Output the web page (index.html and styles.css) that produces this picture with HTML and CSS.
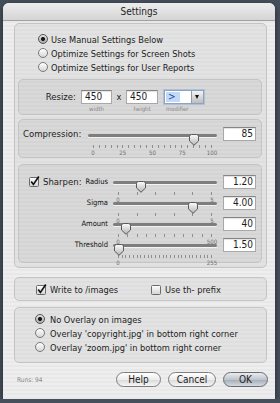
FILE: index.html
```html
<!DOCTYPE html>
<html lang="en">
<head>
    <meta charset="UTF-8">
    <title>Settings</title>
    <link rel="stylesheet" href="styles.css">
</head>
<body>
    <svg class="defs" width="0" height="0">
        <defs>
            <linearGradient id="thumbFill" x1="0" y1="0" x2="0" y2="1">
                <stop offset="0" stop-color="#fdfdfd"/>
                <stop offset="1" stop-color="#b4b4b4"/>
            </linearGradient>
            <linearGradient id="boxFill" x1="0" y1="0" x2="0" y2="1">
                <stop offset="0" stop-color="#ffffff"/>
                <stop offset="1" stop-color="#d2d2d2"/>
            </linearGradient>
        </defs>
    </svg>

    <div class="window">
        <div class="titlebar">Settings</div>

        <div class="content">
            <div class="group outer">
                <div class="radios">
                    <div class="radio-row"><span class="radio on"></span>Use Manual Settings Below</div>
                    <div class="radio-row"><span class="radio"></span>Optimize Settings for Screen Shots</div>
                    <div class="radio-row"><span class="radio"></span>Optimize Settings for User Reports</div>
                </div>

                <div class="group resize">
                    <div class="resize-grid">
                        <span class="resize-label">Resize:</span>
                        <span class="field">450</span>
                        <span class="times">x</span>
                        <span class="field">450</span>
                        <span class="select">
                            <span class="sel">&gt;</span>
                            <span class="arrow"></span>
                        </span>
                        <span></span>
                        <span class="sub">width</span>
                        <span></span>
                        <span class="sub">height</span>
                        <span class="sub sub-left">modifier</span>
                    </div>
                </div>

                <div class="group compression">
                    <div class="comp-row">
                        <span class="comp-label">Compression:</span>
                        <div class="slider slider-wide">
                            <div class="rail">
                                <div class="groove"></div>
                                <div class="thumb-lane">
                                    <svg class="thumb" style="left: 85%" width="10" height="12" viewBox="0 0 10 12"><path d="M2.5 .5h5a2 2 0 0 1 2 2V7L5 11.3.5 7V2.5a2 2 0 0 1 2-2z" fill="url(#thumbFill)" stroke="#595959"/></svg>
                                </div>
                            </div>
                            <div class="ticks">
                                <i></i><i></i><i></i><i></i><i></i><i></i><i></i>
                                <i></i><i></i><i></i><i></i><i></i><i></i><i></i>
                                <i></i><i></i><i></i><i></i><i></i><i></i><i></i>
                            </div>
                            <div class="tick-labels">
                                <span>0</span><span>25</span><span>50</span><span>75</span><span>100</span>
                            </div>
                        </div>
                        <span class="field num">85</span>
                    </div>
                </div>

                <div class="group sharpen">
                    <div class="s-row">
                        <div class="s-label first">
                            <svg class="check" width="11" height="11" viewBox="0 0 11 11"><rect x=".5" y="1.5" width="9" height="9" rx="1" fill="url(#boxFill)" stroke="#6a6a6a"/><path d="M2.2 5.4 4.4 8.4 9.8.6" fill="none" stroke="#111" stroke-width="1.7"/></svg>
                            <span class="sharpen-text">Sharpen:</span>
                            <span class="small-label">Radius</span>
                        </div>
                        <div class="slider">
                            <div class="rail">
                                <div class="groove"></div>
                                <div class="thumb-lane">
                                    <svg class="thumb" style="left: 24%" width="10" height="12" viewBox="0 0 10 12"><path d="M2.5 .5h5a2 2 0 0 1 2 2V7L5 11.3.5 7V2.5a2 2 0 0 1 2-2z" fill="url(#thumbFill)" stroke="#595959"/></svg>
                                </div>
                            </div>
                            <div class="ticks"><i></i><i></i><i></i><i></i><i></i><i></i></div>
                            <div class="tick-labels"><span>0</span><span>5</span></div>
                        </div>
                        <span class="field num">1.20</span>
                    </div>

                    <div class="s-row">
                        <div class="s-label"><span class="small-label">Sigma</span></div>
                        <div class="slider">
                            <div class="rail">
                                <div class="groove"></div>
                                <div class="thumb-lane">
                                    <svg class="thumb" style="left: 80%" width="10" height="12" viewBox="0 0 10 12"><path d="M2.5 .5h5a2 2 0 0 1 2 2V7L5 11.3.5 7V2.5a2 2 0 0 1 2-2z" fill="url(#thumbFill)" stroke="#595959"/></svg>
                                </div>
                            </div>
                            <div class="ticks"><i></i><i></i><i></i><i></i><i></i><i></i></div>
                            <div class="tick-labels"><span>0</span><span>5</span></div>
                        </div>
                        <span class="field num">4.00</span>
                    </div>

                    <div class="s-row">
                        <div class="s-label"><span class="small-label">Amount</span></div>
                        <div class="slider">
                            <div class="rail">
                                <div class="groove"></div>
                                <div class="thumb-lane">
                                    <svg class="thumb" style="left: 8%" width="10" height="12" viewBox="0 0 10 12"><path d="M2.5 .5h5a2 2 0 0 1 2 2V7L5 11.3.5 7V2.5a2 2 0 0 1 2-2z" fill="url(#thumbFill)" stroke="#595959"/></svg>
                                </div>
                            </div>
                            <div class="ticks">
                                <i></i><i></i><i></i><i></i><i></i><i></i>
                                <i></i><i></i><i></i><i></i><i></i>
                            </div>
                            <div class="tick-labels"><span>0</span><span>500</span></div>
                        </div>
                        <span class="field num">40</span>
                    </div>

                    <div class="s-row">
                        <div class="s-label"><span class="small-label">Threshold</span></div>
                        <div class="slider">
                            <div class="rail">
                                <div class="groove"></div>
                                <div class="thumb-lane">
                                    <svg class="thumb" style="left: 0.6%" width="10" height="12" viewBox="0 0 10 12"><path d="M2.5 .5h5a2 2 0 0 1 2 2V7L5 11.3.5 7V2.5a2 2 0 0 1 2-2z" fill="url(#thumbFill)" stroke="#595959"/></svg>
                                </div>
                            </div>
                            <div class="ticks">
                                <i></i><i></i><i></i><i></i><i></i><i></i><i></i><i></i><i></i>
                                <i></i><i></i><i></i><i></i><i></i><i></i><i></i><i></i><i></i>
                                <i></i><i></i><i></i><i></i><i></i><i></i><i></i><i></i>
                            </div>
                            <div class="tick-labels"><span>0</span><span>255</span></div>
                        </div>
                        <span class="field num">1.50</span>
                    </div>
                </div>
            </div>

            <div class="group write">
                <div class="check-item wide">
                    <svg class="check" width="11" height="11" viewBox="0 0 11 11"><rect x=".5" y="1.5" width="9" height="9" rx="1" fill="url(#boxFill)" stroke="#6a6a6a"/><path d="M2.2 5.4 4.4 8.4 9.8.6" fill="none" stroke="#111" stroke-width="1.7"/></svg>
                    <span>Write to /images</span>
                </div>
                <div class="check-item">
                    <svg class="check" width="11" height="11" viewBox="0 0 11 11"><rect x=".5" y="1.5" width="9" height="9" rx="1" fill="url(#boxFill)" stroke="#6a6a6a"/></svg>
                    <span>Use th- prefix</span>
                </div>
            </div>

            <div class="group overlay">
                <div class="radio-row loose"><span class="radio on"></span>No Overlay on images</div>
                <div class="radio-row loose"><span class="radio"></span>Overlay 'copyright.jpg' in bottom right corner</div>
                <div class="radio-row loose"><span class="radio"></span>Overlay 'zoom.jpg' in bottom right corner</div>
            </div>
        </div>

        <div class="footer">
            <span class="runs">Runs: 94</span>
            <span class="btn help">Help</span>
            <span class="btn cancel">Cancel</span>
            <span class="btn ok">OK</span>
        </div>
    </div>
</body>
</html>
```

FILE: styles.css
```css
body {
    margin: 0;
    background: #46505c;
    font-family: "DejaVu Sans Condensed", "DejaVu Sans", sans-serif;
    font-size: 9.2px;
    color: #1c1c1c;
}
.defs {
    position: absolute;
    width: 0;
    height: 0;
}
.window {
    margin: 3px 0 0 3px;
    width: 272px;
    height: 396px;
    border-radius: 6px 6px 0 0;
    overflow: hidden;
    background: repeating-linear-gradient(to bottom, #eeeeee 0, #eeeeee 2px, #e8e8e8 2px, #e8e8e8 4px);
    box-shadow: 0 2px 6px rgba(0, 0, 0, 0.5);
}
.titlebar {
    height: 17px;
    border-bottom: 1px solid #a0a0a0;
    background: linear-gradient(#ededed, #d5d5d5);
    text-align: center;
    line-height: 17px;
    font-size: 10px;
    color: #222;
}
.content {
    padding: 2px 8px 0 11px;
}
.group {
    box-sizing: border-box;
    border: 1px solid #c4c4c4;
    border-radius: 5px;
    background: rgba(0, 0, 0, 0.045);
}

/* manual / optimize radios */
.outer {
    height: 245px;
    padding: 8px 4px 0 3px;
}
.radios {
    padding-left: 20px;
}
.radio-row {
    display: flex;
    align-items: center;
    height: 14px;
    white-space: nowrap;
}
.radio {
    box-sizing: border-box;
    width: 10px;
    height: 10px;
    margin-right: 3px;
    border-radius: 50%;
    border: 1px solid #7a7a7a;
    background: linear-gradient(#ffffff, #d6d6d6);
    flex: none;
}
.radio.on {
    background: radial-gradient(circle, #1a1a1a 0, #1a1a1a 1.6px, transparent 2.4px), linear-gradient(#e2e2e2, #a9a9a9);
    border-color: #555;
}

/* resize */
.resize {
    height: 36px;
    margin-top: 5px;
    padding-top: 10px;
}
.resize-grid {
    display: grid;
    grid-template-columns: 62px 31px 14px 32px 46px;
    grid-template-rows: 14px 9px;
}
.resize-label {
    text-align: right;
    padding-right: 5px;
    line-height: 14px;
    font-size: 9.5px;
}
.times {
    text-align: center;
    line-height: 14px;
}
.field {
    box-sizing: border-box;
    height: 14px;
    padding: 0 3px;
    background: #fff;
    border: 1px solid #a8a8a8;
    border-top-color: #858585;
    box-shadow: inset 0 1px 1px rgba(0, 0, 0, 0.12);
    line-height: 12px;
    font-size: 10px;
}
.field.num {
    width: 33px;
    margin-left: 6px;
    text-align: right;
    padding-right: 2px;
    flex: none;
}
.select {
    display: flex;
    box-sizing: border-box;
    width: 40px;
    height: 14px;
    margin-left: 6px;
    background: #fff;
    border: 1px solid #8aa3c6;
    box-shadow: 0 0 0 1px rgba(110, 150, 210, 0.35);
}
.sel {
    margin: 1px 0 1px 1px;
    padding: 0 4px 0 2px;
    background: #c3d9f7;
    color: #1d4ea3;
    line-height: 10px;
    font-size: 10px;
}
.arrow {
    margin-left: auto;
    width: 11px;
    background: linear-gradient(#f4f4f4, #bdbdbd);
    border-left: 1px solid #9a9a9a;
    position: relative;
}
.arrow::after {
    content: "";
    position: absolute;
    left: 3px;
    top: 4px;
    border-left: 2.5px solid transparent;
    border-right: 2.5px solid transparent;
    border-top: 4px solid #111;
}
.sub {
    text-align: center;
    font-size: 6px;
    line-height: 9px;
    color: #8a8a8a;
}
.sub-left {
    text-align: left;
    padding-left: 8px;
}

/* sliders */
.compression {
    height: 39px;
    margin-top: 4px;
    padding-top: 7px;
}
.comp-row {
    display: flex;
}
.comp-label {
    width: 65px;
    padding-left: 4px;
    line-height: 13px;
    font-size: 9.5px;
}
.slider {
    width: 104px;
    height: 22px;
    margin-top: 1px;
    margin-left: 5px;
    flex: none;
}
.slider-wide {
    width: 129px;
    margin-left: 0;
    margin-top: 2px;
}
.rail {
    position: relative;
    height: 11px;
}
.groove {
    margin-top: 5px;
    height: 3px;
    border-radius: 2px;
    background: #7e7e7e;
    box-shadow: 0 1px 0 rgba(255, 255, 255, 0.7);
}
.thumb-lane {
    position: absolute;
    top: 0;
    left: 5px;
    right: 5px;
    height: 11px;
}
.thumb {
    position: absolute;
    top: 0;
    transform: translateX(-50%);
}
.ticks {
    display: flex;
    justify-content: space-between;
    height: 4px;
    margin: 0 5px;
}
.ticks i {
    width: 1px;
    height: 3px;
    background: #8e8e8e;
}
.tick-labels {
    display: flex;
    justify-content: space-between;
    margin: 0 5px;
    height: 7px;
    font-size: 6px;
    line-height: 7px;
    color: #6e6e6e;
}
.tick-labels span {
    width: 0;
    display: flex;
    justify-content: center;
    white-space: nowrap;
}

/* sharpen */
.sharpen {
    height: 99px;
    margin-top: 6px;
    padding-top: 10px;
}
.s-row {
    display: flex;
    height: 21px;
}
.s-label {
    width: 89px;
    display: flex;
    align-items: flex-start;
    justify-content: flex-end;
    line-height: 13px;
    flex: none;
}
.s-label.first {
    justify-content: flex-start;
}
.s-label .check {
    margin: 1px 0 0 10px;
}
.sharpen-text {
    margin-left: 3px;
    font-size: 9.5px;
}
.small-label {
    margin-left: auto;
    font-size: 7.5px;
    color: #111;
}

/* write / overlay */
.write {
    height: 24px;
    margin-top: 9px;
    padding: 4px 0 0 21px;
    display: flex;
}
.check-item {
    display: flex;
    align-items: center;
    height: 14px;
    white-space: nowrap;
}
.check-item .check {
    margin-right: 3px;
}
.check-item.wide {
    width: 115px;
}
.overlay {
    height: 56px;
    margin-top: 6px;
    padding: 4px 0 0 20px;
}
.radio-row.loose .radio {
    margin-right: 5px;
}

/* footer */
.footer {
    display: flex;
    align-items: center;
    height: 15px;
    padding: 9px 7px 0 14px;
}
.runs {
    font-size: 6.5px;
    color: #8a8a8a;
}
.btn {
    box-sizing: border-box;
    height: 15px;
    margin-left: 7px;
    border: 1px solid #7d7d7d;
    border-radius: 8px;
    background: linear-gradient(#ffffff, #ececec 50%, #d9d9d9 51%, #f6f6f6);
    text-align: center;
    line-height: 13px;
    font-size: 10px;
}
.help {
    width: 45px;
    margin-left: auto;
}
.cancel {
    width: 48px;
}
.ok {
    width: 45px;
    border-color: #666c74;
    background: linear-gradient(#e9ecef, #bfc5cc 50%, #a3abb5 51%, #d4d9df);
}
```
